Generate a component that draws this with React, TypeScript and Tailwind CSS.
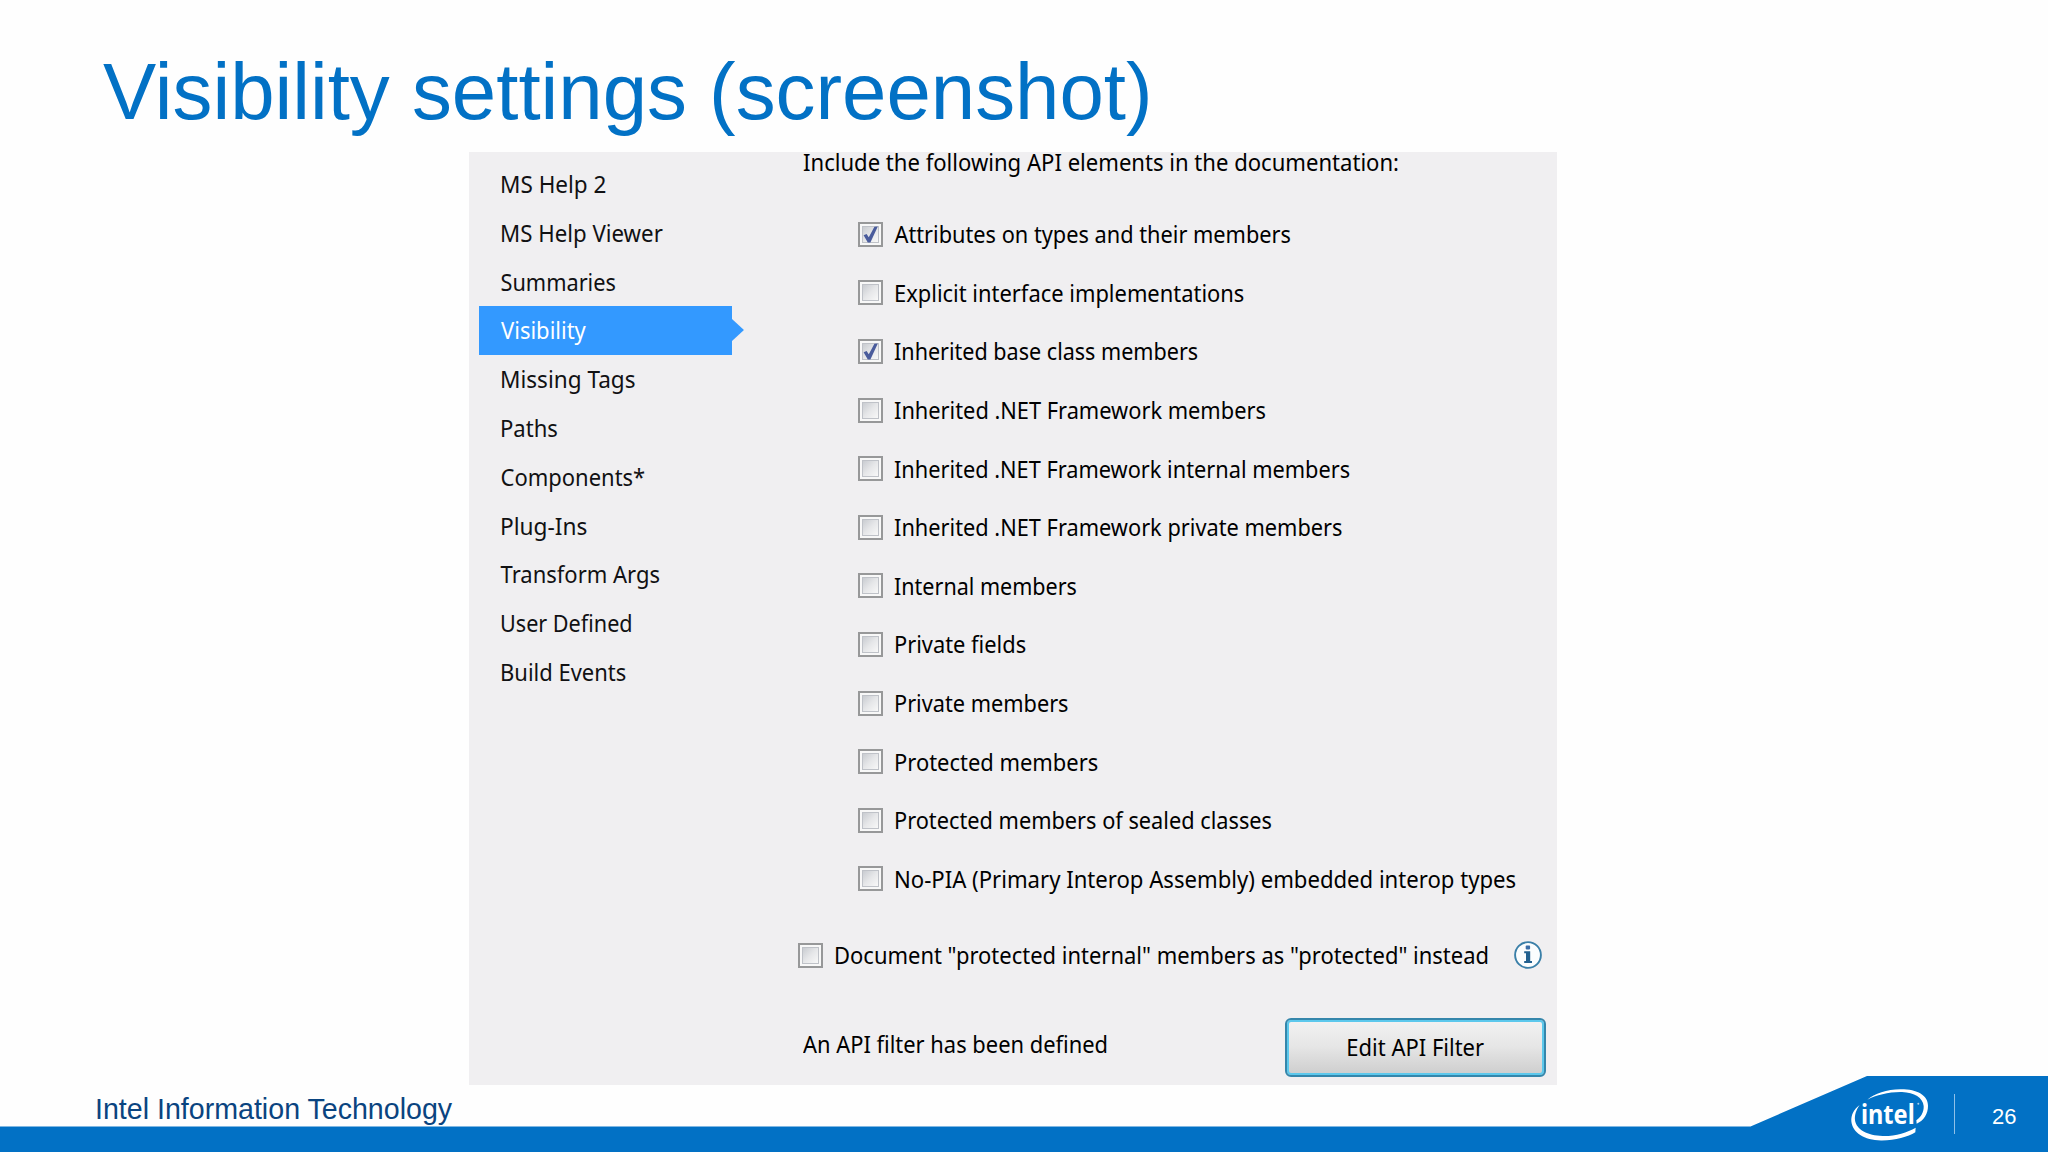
import React from "react";

type Entry = { label: string; fit: string };
type Option = Entry & { checked?: boolean };

const NAV: Entry[] = [
  { label: "MS Help 2", fit: "scale-x-[0.938]" },
  { label: "MS Help Viewer", fit: "scale-x-[0.927]" },
  { label: "Summaries", fit: "scale-x-[0.905] translate-x-[0.5px]" },
  { label: "Visibility", fit: "scale-x-[0.917] translate-x-[1px]" },
  { label: "Missing Tags", fit: "scale-x-[0.94]" },
  { label: "Paths", fit: "scale-x-[0.92]" },
  { label: "Components*", fit: "scale-x-[0.916] translate-x-[0.5px]" },
  { label: "Plug-Ins", fit: "scale-x-[0.944]" },
  { label: "Transform Args", fit: "scale-x-[0.917] translate-x-[0.5px]" },
  { label: "User Defined", fit: "scale-x-[0.9]" },
  { label: "Build Events", fit: "scale-x-[0.916]" },
];

const OPTIONS: Option[] = [
  { label: "Attributes on types and their members", fit: "scale-x-[0.906] translate-x-[1.5px]", checked: true },
  { label: "Explicit interface implementations", fit: "scale-x-[0.913] translate-x-[1px]" },
  { label: "Inherited base class members", fit: "scale-x-[0.898] translate-x-[1px]", checked: true },
  { label: "Inherited .NET Framework members", fit: "scale-x-[0.908] translate-x-[1px]" },
  { label: "Inherited .NET Framework internal members", fit: "scale-x-[0.906] translate-x-[1px]" },
  { label: "Inherited .NET Framework private members", fit: "scale-x-[0.907] translate-x-[1px]" },
  { label: "Internal members", fit: "scale-x-[0.897] translate-x-[1px]" },
  { label: "Private fields", fit: "scale-x-[0.91] translate-x-[1px]" },
  { label: "Private members", fit: "scale-x-[0.905] translate-x-[1px]" },
  { label: "Protected members", fit: "scale-x-[0.914] translate-x-[1px]" },
  { label: "Protected members of sealed classes", fit: "scale-x-[0.906] translate-x-[1px]" },
  { label: "No-PIA (Primary Interop Assembly) embedded interop types", fit: "scale-x-[0.9215] translate-x-[1px]" },
];

function Label({ label, fit }: Entry) {
  return <span className={`block origin-left whitespace-nowrap ${fit}`}>{label}</span>;
}

function CheckBox({ checked }: { checked?: boolean }) {
  return (
    <span className="flex size-[25px] shrink-0 items-center justify-center border-2 border-[#979899] bg-[#f8f8f8]">
      <span className="flex size-[17px] items-center justify-center border border-[#bfc2c8] bg-linear-to-br from-[#c9ccd1] via-[#e6e7e9] to-[#f8f8f8]">
        {checked && (
          <svg viewBox="0 0 17 17" className="size-[17px] shrink-0">
            <path d="M1.6 9.2 L4.6 8 L6.8 11.2 L12.4 0.8 L15.8 0.6 L8.4 16.4 L5.8 16.4 Z" fill="#4a5c9c" />
          </svg>
        )}
      </span>
    </span>
  );
}

function InfoIcon() {
  return (
    <svg viewBox="0 0 28 28" className="size-7">
      <circle cx="14" cy="14" r="12.9" fill="#fbfdfe" stroke="#3a7fa8" strokeWidth="1.9" />
      <rect x="11.7" y="4.6" width="4.4" height="3.8" rx="0.8" fill="#3a6ea8" />
      <path d="M10.2 10.2 H16.2 V19.9 H18 V21.9 H10.2 V19.9 H12 V12.2 H10.2 Z" fill="#22608f" />
    </svg>
  );
}

function IntelLogo() {
  return (
    <svg viewBox="386 80 252 168" className="h-14 w-21">
      <path
        d="M441 118 C462 100 500 87 540 86.500 C590 86 623 104 623 136 C623 160 611 180 589 190 L588 180 C602 170 611 155 610 137 C608 112 582 97 545 95 C508 94 468 104 441 118 Z"
        fill="#fff"
      />
      <path
        d="M418 134 C400 147 392 164 393 183 C396 217 432 240 482 240.500 C524 241 562 230 585 216 L586 202 C560 217 524 228 487 227 C442 226 408 208 404 180 C402 163 408 148 418 134 Z"
        fill="#fff"
      />
      <text
        x="422"
        y="192"
        textLength="161"
        lengthAdjust="spacingAndGlyphs"
        fontSize="82"
        fill="#fff"
        className="font-['Noto_Sans',sans-serif] font-bold"
      >
        intel
      </text>
      <circle cx="594" cy="130" r="3" fill="#a9cdec" />
    </svg>
  );
}

export default function App() {
  return (
    <main className="flex h-[1152px] w-[2048px] flex-col overflow-hidden bg-[#fefefe] font-['Liberation_Sans',Arial,sans-serif]">
      <h1 className="h-[152px] pt-[46px] pl-[103px] text-[79.8px] leading-[92px] whitespace-nowrap text-[#0271c5]">
        Visibility settings (screenshot)
      </h1>

      <section className="ml-[469px] flex h-[933px] w-[1088px] shrink-0 bg-[#f0eff1] font-['Noto_Sans',sans-serif] text-2xl leading-9 text-[#111113]">
        <nav className="w-[275px] shrink-0 pt-[7.7px] pl-[10px]">
          {NAV.map((item, i) =>
            i === 3 ? (
              <div key={item.label} className="flex h-[48.8px] items-center">
                <div className="flex h-[48.8px] w-[254px] items-center bg-[#3399ff] pl-[21px] text-white">
                  <Label {...item} />
                </div>
                <svg viewBox="0 0 12 22" className="h-[22px] w-3">
                  <path d="M0 0 L12 11 L0 22 Z" fill="#3399ff" />
                </svg>
              </div>
            ) : (
              <div key={item.label} className="flex h-[48.8px] items-center pl-[21px]">
                <Label {...item} />
              </div>
            )
          )}
        </nav>

        <div className="flex grow flex-col">
          <div className="-mt-2 ml-[58.5px] h-[61px] text-black">
            <Label label="Include the following API elements in the documentation:" fit="scale-x-[0.92]" />
          </div>

          <div className="ml-[114px] text-black">
            {OPTIONS.map((o) => (
              <div key={o.label} className="flex h-[58.6px] items-center gap-[10px]">
                <CheckBox checked={o.checked} />
                <Label {...o} />
              </div>
            ))}
          </div>

          <div className="mt-[27px] ml-[54px] flex h-10 w-[744px] items-center text-black">
            <CheckBox />
            <div className="ml-[11px] w-[680px]">
              <Label label={'Document "protected internal" members as "protected" instead'} fit="scale-x-[0.9155]" />
            </div>
            <InfoIcon />
          </div>

          <div className="mt-[42.5px] ml-[59px] flex w-[743px] justify-between text-black">
            <div className="pt-[8px]">
              <Label label="An API filter has been defined" fit="scale-x-[0.912]" />
            </div>
            <button className="flex h-[59px] w-[261px] items-center justify-center rounded-[6px] border-2 border-[#3586ab] bg-linear-to-b from-[#f2f2f2] from-0% via-[#e6e6e6] via-48% to-[#cdcdcd] to-100% shadow-[inset_0_0_0_2px_#5cc8ec]">
              <span className="scale-x-[0.916] whitespace-nowrap">Edit API Filter</span>
            </button>
          </div>
        </div>
      </section>

      <footer className="relative h-[67px] shrink-0">
        <div className="absolute right-0 bottom-0 h-[76px] w-full bg-[#0271c5] [clip-path:polygon(0_50.5px,1750.5px_50.5px,1867px_0,100%_0,100%_100%,0_100%)]" />
        <div className="relative flex h-full">
          <p className="w-[1754px] pt-[8px] pl-[95px] text-[28.6px] leading-[32px] whitespace-nowrap text-[#0a4480]">
            Intel Information Technology
          </p>
          <div className="flex w-[294px] items-start pl-[95px] text-white">
            <div className="pt-[2px]">
              <IntelLogo />
            </div>
            <div className="mt-[9px] ml-[21px] h-10 w-px bg-[#8fc0e8]" />
            <span className="mt-[19px] ml-[37px] text-[22px] leading-[26px]">26</span>
          </div>
        </div>
      </footer>
    </main>
  );
}
